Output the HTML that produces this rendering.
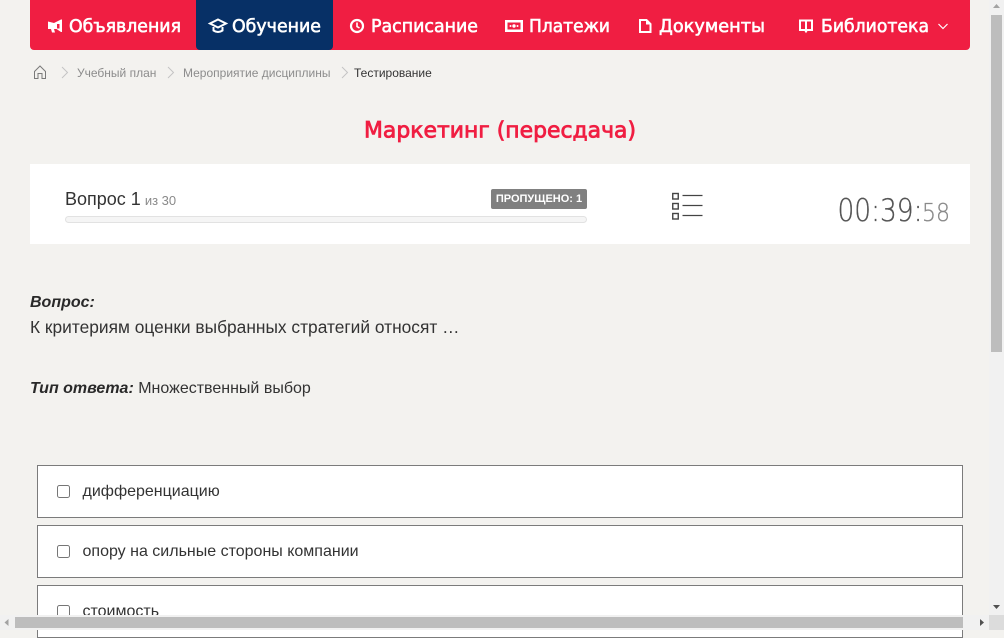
<!DOCTYPE html>
<html lang="ru"><head><meta charset="utf-8"><title>Тестирование</title>
<style>
html,body{margin:0;padding:0;width:1004px;height:630px;overflow:hidden;background:#f3f2ef;font-family:"Liberation Sans",sans-serif;color:#292929}
.a{position:absolute;white-space:nowrap}
.nav{left:30px;top:0;width:940px;height:50px;background:#f01e42;border-radius:0 0 4px 4px}
.act{left:196px;top:0;width:137px;height:50px;background:#073066;border-radius:0 0 4px 4px}
svg{position:absolute;overflow:visible}
.bc{top:65px;font-size:12px;line-height:16px;color:#8c8c8c}
.opt{left:37px;width:924px;height:51px;background:#fff;border:1px solid #7b7b7b}
.cb{left:57px;width:11px;height:11px;border:1px solid #767676;border-radius:2.5px;background:#fff}
.ot{left:82.5px;font-size:16px;line-height:20px;color:#333}
</style></head><body>
<div class="a nav"></div><div class="a act"></div>

<svg style="left:0;top:0" width="1004" height="50">
<g font-family="DejaVu Sans" font-size="18" fill="#fff" stroke="#fff" stroke-width=".6">
<text x="69" y="32" textLength="112" lengthAdjust="spacingAndGlyphs">Объявления</text>
<text x="232" y="32" textLength="89" lengthAdjust="spacingAndGlyphs">Обучение</text>
<text x="371" y="32" textLength="107" lengthAdjust="spacingAndGlyphs">Расписание</text>
<text x="529" y="32" textLength="81" lengthAdjust="spacingAndGlyphs">Платежи</text>
<text x="659" y="32" textLength="106" lengthAdjust="spacingAndGlyphs">Документы</text>
<text x="821" y="32" textLength="108" lengthAdjust="spacingAndGlyphs">Библиотека</text>
</g>
<path d="M48 21.500l6 1.500 7-3.500h1v12.500h-1l-4.500-3h-2.500l1 3.500h-3l-1-3.500h-3z" fill="#fff"/><path d="M57 24h2.500v4.500h-2.500z" fill="#f01e42"/>
<path d="M218 19.500l8 4-8 4-8-4z M213.500 27v3.500q4.500 3 9 0V27" fill="none" stroke="#fff" stroke-width="2"/>
<circle cx="357" cy="26" r="6" fill="none" stroke="#fff" stroke-width="2.200"/><path d="M357 22.500V26.500l2.500 1.500" fill="none" stroke="#fff" stroke-width="1.600"/>
<path d="M505 20h18v12h-18z" fill="#fff"/><rect x="507.500" y="22.500" width="13" height="7" fill="#f01e42"/><circle cx="514" cy="26" r="1.700" fill="#fff"/><circle cx="510.500" cy="26" r="1" fill="#fff"/><circle cx="517.500" cy="26" r="1" fill="#fff"/>
<path d="M640 20h6.500l4 4v8h-10.500z" fill="none" stroke="#fff" stroke-width="2"/><path d="M646 19.500v5h5" fill="#fff"/>
<path d="M800 20.500h5.500l.5 1 .5-1h5.500v9.500h-5l-1 1.500-1-1.500h-5z M806 21.500v9" fill="none" stroke="#fff" stroke-width="2"/>
<path d="M938.500 24l4.500 4.500 4.500-4.500" fill="none" stroke="#fff" stroke-width="1.200"/>
</svg>

<svg style="left:0;top:60px" width="360" height="26" fill="none">
<path d="M34.500 18.500v-7l5.500-5.500 5.500 5.500v7h-3.500v-5h-4v5z" stroke="#7a7a7a" stroke-width="1"/>
<path d="M62 7l5.500 5.500L62 18M168 7l5.500 5.500L168 18M342 7l5.500 5.500L342 18" stroke="#c4c4c4" stroke-width="1"/>
</svg>
<div class="a bc" style="left:77px">Учебный план</div>
<div class="a bc" style="left:183px">Мероприятие дисциплины</div>
<div class="a bc" style="left:354px;color:#333">Тестирование</div>

<svg style="left:350px;top:110px" width="300" height="40"><text x="14" y="27.500" textLength="272" lengthAdjust="spacingAndGlyphs" font-family="DejaVu Sans" font-size="22" fill="#f01e42" stroke="#f01e42" stroke-width=".8">Маркетинг (пересдача)</text></svg>

<div class="a" style="left:30px;top:164px;width:940px;height:80px;background:#fff"></div>
<div class="a" style="left:65px;top:187px;font-size:18px;line-height:24px;color:#333">Вопрос 1 <span style="font-size:13px;color:#8a8a8a;margin-left:-1px">из 30</span></div>
<div class="a" style="left:65px;top:216px;width:520px;height:5px;border:1px solid #e2e2e2;border-radius:4px;background:#f5f5f5"></div>
<div class="a" style="left:491px;top:189px;width:96px;height:20px;background:#808080;border-radius:2px;color:#fff;font-size:11px;font-weight:bold;line-height:20px;text-align:center">ПРОПУЩЕНО: 1</div>
<svg style="left:672px;top:193px" width="32" height="28" fill="none" stroke="#444">
<rect x=".75" y=".5" width="5.500" height="5.500" stroke-width="1.400"/><rect x=".75" y="10.500" width="5.500" height="5.500" stroke-width="1.400"/><rect x=".75" y="20.500" width="5.500" height="5.500" stroke-width="1.400"/>
<path d="M10.500 2.500h20M10.500 12.500h20M10.500 22.500h20" stroke-width="1.300"/></svg>
<svg style="left:830px;top:186px" width="130" height="50"><text x="7.500" y="35" textLength="85" lengthAdjust="spacingAndGlyphs" font-family="DejaVu Sans ExtraLight, DejaVu Sans" font-size="31" fill="#555" stroke="#555" stroke-width=".35" style="font-weight:200">00:39:</text><text x="92" y="35" textLength="28" lengthAdjust="spacingAndGlyphs" font-family="DejaVu Sans ExtraLight, DejaVu Sans" font-size="25" fill="#8a8a8a" stroke="#8a8a8a" stroke-width=".3" style="font-weight:200">58</text></svg>

<div class="a" style="left:30px;top:293px;font-size:16px;line-height:20px;font-weight:bold;font-style:italic">Вопрос:</div>
<div class="a" style="left:30px;top:317px;font-size:17.350px;line-height:20px;color:#333">К критериям оценки выбранных стратегий относят …</div>
<div class="a" style="left:30px;top:379px;font-size:16px;line-height:20px;color:#333"><b style="font-style:italic;color:#292929">Тип ответа:</b> Множественный выбор</div>

<div class="a opt" style="top:465px"></div><div class="a cb" style="top:485px"></div><div class="a ot" style="top:482px">дифференциацию</div>
<div class="a opt" style="top:525px"></div><div class="a cb" style="top:545px"></div><div class="a ot" style="top:542px">опору на сильные стороны компании</div>
<div class="a opt" style="top:585px"></div><div class="a cb" style="top:605px"></div><div class="a ot" style="top:602px">стоимость</div>

<div class="a" style="left:989px;top:0;width:15px;height:630px;background:#f1f1f1"></div>
<div class="a" style="left:991px;top:15px;width:11px;height:337px;background:#bdbdbd"></div>
<div class="a" style="left:0;top:615px;width:989px;height:15px;background:#f1f1f1"></div>
<div class="a" style="left:15px;top:617px;width:948px;height:11px;background:#bdbdbd"></div>
<div class="a" style="left:989px;top:615px;width:15px;height:15px;background:#dcdcdc"></div>
<svg style="left:0;top:0" width="1004" height="630">
<path d="M993 8l3.500-4 3.500 4z" fill="#a3a3a3"/>
<path d="M993 605h7l-3.500 4z" fill="#505050"/>
<path d="M8.500 619v7l-4-3.500z" fill="#a3a3a3"/>
<path d="M980 619v7l4-3.500z" fill="#505050"/>
</svg>
</body></html>
